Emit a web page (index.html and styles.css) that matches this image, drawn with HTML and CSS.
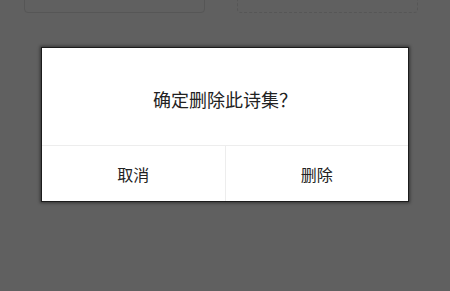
FILE: index.html
```html
<!DOCTYPE html>
<html lang="zh">
<head>
<meta charset="utf-8">
<link rel="stylesheet" href="styles.css">
</head>
<body>
<div class="page">
  <div class="cards">
    <div class="card"></div>
    <div class="card dashed"></div>
  </div>
</div>
<div class="overlay">
  <div class="dialog">
    <div class="title">确定删除此诗集？</div>
    <div class="actions">
      <div class="btn">取消</div>
      <div class="btn">删除</div>
    </div>
  </div>
</div>
</body>
</html>
```
FILE: styles.css
```css
html, body {
  margin: 0;
  padding: 0;
  width: 450px;
  height: 291px;
  overflow: hidden;
  background: #606060;
  font-family: "Liberation Serif", "Noto Sans CJK SC", serif;
}
.page {
  position: relative;
  height: 291px;
}
.cards {
  display: flex;
  gap: 32px;
  padding: 0 32px 0 24px;
  margin-top: -27px;
}
.card {
  width: 181px;
  height: 40px;
  border: 1px solid #565656;
  border-radius: 4px;
  box-sizing: border-box;
}
.card.dashed {
  border-style: dashed;
}
.overlay {
  position: absolute;
  inset: 0;
  display: flex;
  justify-content: center;
  align-items: flex-start;
  padding-top: 47px;
}
.dialog {
  width: 368px;
  height: 155px;
  box-sizing: border-box;
  background: #fff;
  border: 1px solid #1c1c1c;
  box-shadow: 0 0 3px 1px rgba(0,0,0,0.45);
  display: flex;
  flex-direction: column;
}
.title {
  height: 98px;
  display: flex;
  align-items: center;
  justify-content: center;
  font-size: 18px;
  color: #222;
  padding-top: 4px;
  box-sizing: border-box;
  border-bottom: 1px solid #ededed;
}
.actions {
  flex: 1;
  display: flex;
}
.btn {
  flex: 1;
  display: flex;
  align-items: center;
  justify-content: center;
  font-size: 16px;
  color: #222;
}
.btn + .btn {
  border-left: 1px solid #ededed;
}
```
